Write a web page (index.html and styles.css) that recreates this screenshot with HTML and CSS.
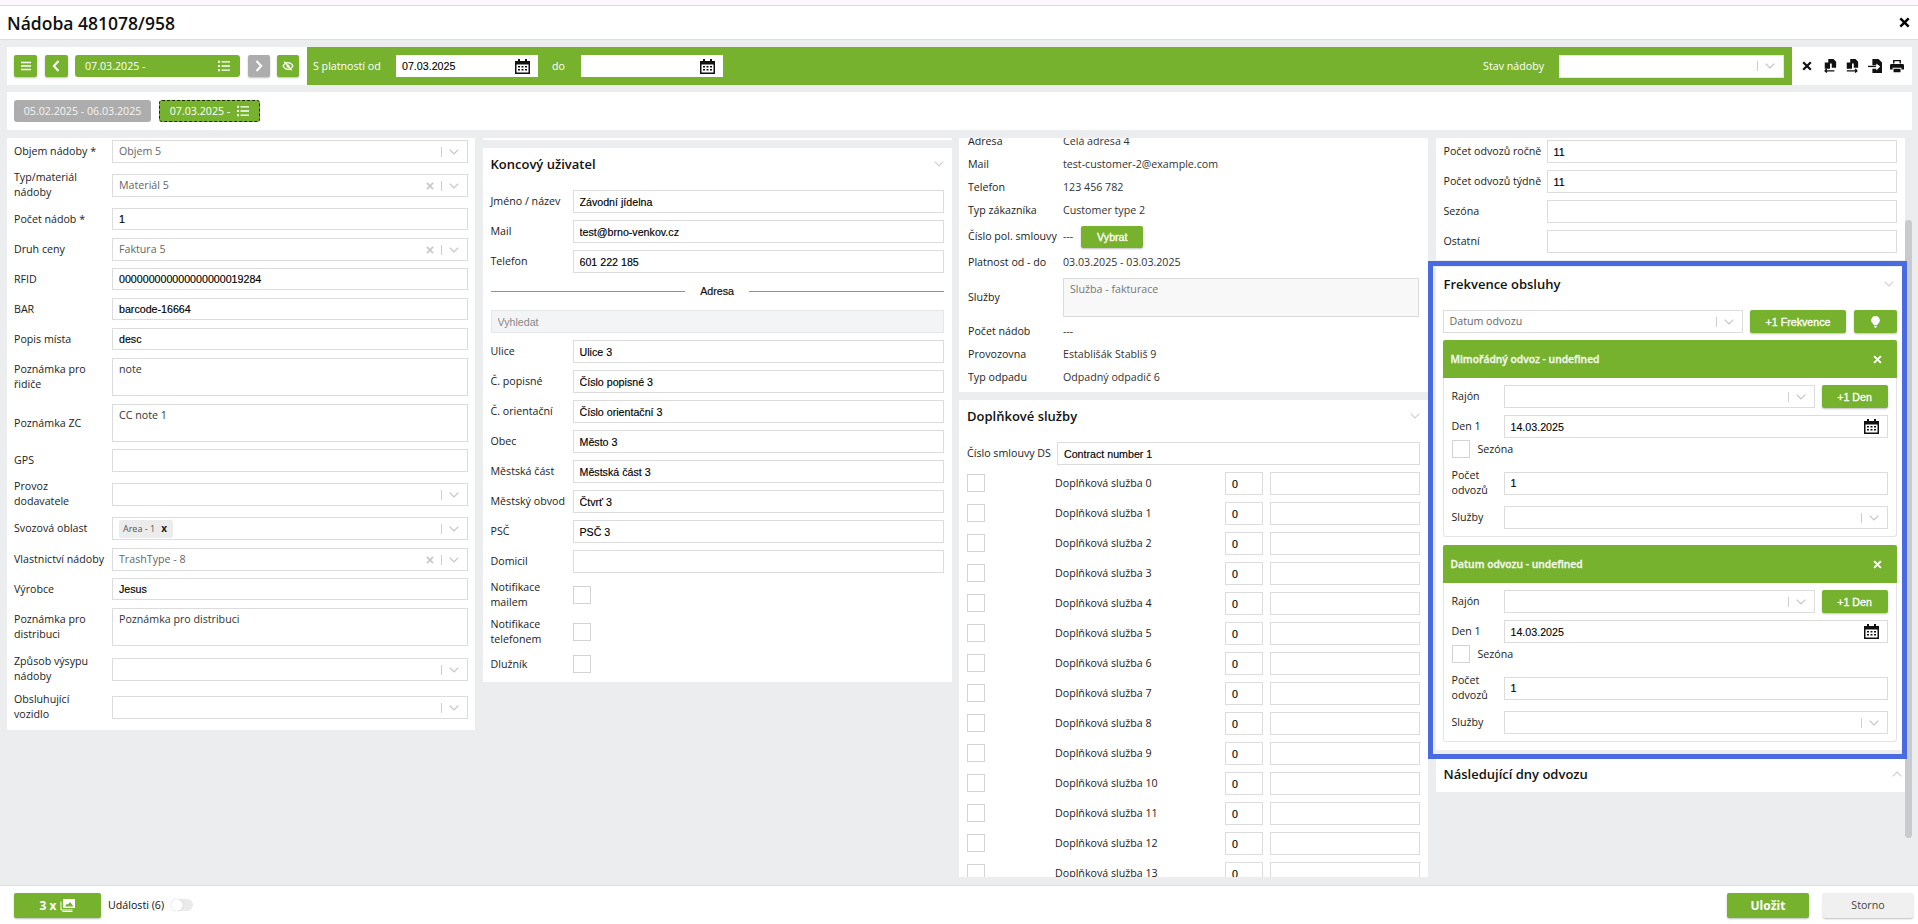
FILE: index.html
```html
<!DOCTYPE html>
<html lang="cs">
<head>
<meta charset="utf-8">
<title>Nádoba 481078/958</title>
<link rel="stylesheet" href="styles.css">
</head>
<body>
<svg class="defs" width="0" height="0" aria-hidden="true">
  <symbol id="i-chev" viewBox="0 0 10 6"><path d="M.7.7 5 5 9.3.7" fill="none" stroke="currentColor" stroke-width="1.2"/></symbol>
  <symbol id="i-x" viewBox="0 0 10 10"><path d="M1.2 1.2 8.8 8.8M8.8 1.2 1.2 8.8" fill="none" stroke="currentColor" stroke-width="2.2"/></symbol>
  <symbol id="i-menu" viewBox="0 0 12 12"><path d="M1 2.5h10M1 6h10M1 9.5h10" stroke="currentColor" stroke-width="1.4"/></symbol>
  <symbol id="i-left" viewBox="0 0 8 12"><path d="M6.5 1 1.8 6l4.7 5" fill="none" stroke="currentColor" stroke-width="2"/></symbol>
  <symbol id="i-right" viewBox="0 0 8 12"><path d="M1.5 1l4.7 5-4.7 5" fill="none" stroke="currentColor" stroke-width="2"/></symbol>
  <symbol id="i-list" viewBox="0 0 12 12"><path d="M0 .8h2v2H0zM0 5h2v2H0zM0 9.2h2v2H0z" fill="currentColor"/><path d="M3.5 1.8H12M3.5 6H12M3.5 10.2H12" stroke="currentColor" stroke-width="1.3"/></symbol>
  <symbol id="i-eye" viewBox="0 0 14 12"><path d="M1 6c1.600-2.700 3.600-4 6-4s4.400 1.300 6 4c-1.600 2.700-3.600 4-6 4S2.600 8.700 1 6z" fill="none" stroke="currentColor" stroke-width="1.400"/><circle cx="7" cy="6" r="1.800" fill="currentColor"/><path d="M2.500 .8 11.500 11.200" stroke="currentColor" stroke-width="1.500"/></symbol>
  <symbol id="i-cal" viewBox="0 0 15 15"><path d="M3 0h2v2h5V0h2v2h3v13H0V2h3zM1.500 5.500V13.500h12V5.500z" fill="currentColor" fill-rule="evenodd"/><path d="M3 7h2v1.500H3zM6.500 7h2v1.500h-2zM10 7h2v1.500h-2zM3 10h2v1.500H3zM6.500 10h2v1.500h-2zM10 10h2v1.500h-2z" fill="currentColor"/></symbol>
  <symbol id="i-copyin" viewBox="0 0 14 16"><path d="M5 0h6l3 3v7H9V5H5zM1 4h6v7H1z" fill="currentColor"/><path d="M1 13.500h11M1 13.500l2.500-2M1 13.500l2.500 2" fill="none" stroke="currentColor" stroke-width="1.400"/></symbol>
  <symbol id="i-copyout" viewBox="0 0 14 16"><path d="M5 0h6l3 3v7H9V5H5zM1 4h6v7H1z" fill="currentColor"/><path d="M1 13.500h12M13 13.500l-2.500-2M13 13.500l-2.500 2" fill="none" stroke="currentColor" stroke-width="1.400"/></symbol>
  <symbol id="i-import" viewBox="0 0 16 16"><path d="M5 0h7l4 4v12H5v-5h4.500v2L14 8.500 9.500 5v2H5z" fill="currentColor"/><path d="M0 8.500h9" stroke="currentColor" stroke-width="1.500"/></symbol>
  <symbol id="i-print" viewBox="0 0 16 16"><path d="M3.500 1h9v4h-1.600V2.600H5.100V5H3.500zM1.500 5.800h13a1.500 1.500 0 0 1 1.500 1.500V12h-3v-2H3v2H0V7.300a1.500 1.500 0 0 1 1.500-1.500zM4 11h8v4H4z" fill="currentColor"/></symbol>
  <symbol id="i-bulb" viewBox="0 0 10 14"><path d="M5 0a5 5 0 0 1 3 9c-.6.500-.8 1-.9 1.500H2.900C2.800 10 2.600 9.500 2 9a5 5 0 0 1 3-9zM3.200 11.500h3.600v1H3.200zM4 13h2v1H4z" fill="currentColor"/></symbol>
  <symbol id="i-imgs" viewBox="0 0 15 13"><path d="M3 0h12v9H3zM5 7.500h8.500L10 3 8 5.500 7 4.500z" fill="currentColor" fill-rule="evenodd"/><path d="M1 2.500V11h11.500M2.500 12.500h10" fill="none" stroke="currentColor" stroke-width="1"/></symbol>
</svg>

<div class="topstrip"></div>
<header class="modal-head">
  <h1 class="modal-title">Nádoba 481078/958</h1>
  <svg class="modal-close"><use href="#i-x"/></svg>
</header>

<div class="toolbar">
  <div class="tb-left">
    <button class="btn btn-sq"><svg class="ic12"><use href="#i-menu"/></svg></button>
    <button class="btn btn-sq"><svg class="ic-ch"><use href="#i-left"/></svg></button>
    <button class="btn btn-date"><span>07.03.2025 -</span><svg class="ic12"><use href="#i-list"/></svg></button>
    <button class="btn btn-sq2 btn-gray"><svg class="ic-ch"><use href="#i-right"/></svg></button>
    <button class="btn btn-sq2"><svg class="ic-eye"><use href="#i-eye"/></svg></button>
  </div>
  <div class="tb-green">
    <span class="tb-label tb-from">S platností od</span>
    <div class="datefield tb-date"><input class="bare" value="07.03.2025" readonly><svg class="ic-cal"><use href="#i-cal"/></svg></div>
    <span class="tb-label tb-do">do</span>
    <div class="datefield tb-date"><input class="bare" readonly><svg class="ic-cal"><use href="#i-cal"/></svg></div>
    <span class="tb-label tb-state">Stav nádoby</span>
    <div class="select tb-select"><span class="val"></span><i class="pipe"></i><svg class="chev"><use href="#i-chev"/></svg></div>
  </div>
  <div class="tb-right">
    <svg class="tb-ic tb-x"><use href="#i-x"/></svg>
    <svg class="tb-ic"><use href="#i-copyin"/></svg>
    <svg class="tb-ic"><use href="#i-copyout"/></svg>
    <svg class="tb-ic"><use href="#i-import"/></svg>
    <svg class="tb-ic"><use href="#i-print"/></svg>
  </div>
</div>

<div class="versions">
  <button class="btn ver ver-old">05.02.2025 - 06.03.2025</button>
  <button class="btn ver ver-cur"><span>07.03.2025 -</span><svg class="ic12"><use href="#i-list"/></svg></button>
</div>

<main class="content">
  <section class="col col1">
    <div class="row"><label class="lab">Objem nádoby *</label><div class="select"><span class="val">Objem 5</span><i class="pipe"></i><svg class="chev"><use href="#i-chev"/></svg></div></div>
    <div class="row row-two"><label class="lab">Typ/materiál nádoby</label><div class="select"><span class="val">Materiál 5</span><svg class="clr"><use href="#i-x"/></svg><i class="pipe"></i><svg class="chev"><use href="#i-chev"/></svg></div></div>
    <div class="row"><label class="lab">Počet nádob *</label><input class="input thin" value="1" readonly></div>
    <div class="row"><label class="lab">Druh ceny</label><div class="select"><span class="val">Faktura 5</span><svg class="clr"><use href="#i-x"/></svg><i class="pipe"></i><svg class="chev"><use href="#i-chev"/></svg></div></div>
    <div class="row"><label class="lab">RFID</label><input class="input thin" value="000000000000000000019284" readonly></div>
    <div class="row"><label class="lab">BAR</label><input class="input thin" value="barcode-16664" readonly></div>
    <div class="row"><label class="lab">Popis místa</label><input class="input thin" value="desc" readonly></div>
    <div class="row row-area"><label class="lab">Poznámka pro řidiče</label><textarea class="area" readonly>note</textarea></div>
    <div class="row row-area row-area-s"><label class="lab">Poznámka ZC</label><textarea class="area" readonly>CC note 1</textarea></div>
    <div class="row"><label class="lab">GPS</label><input class="input" readonly></div>
    <div class="row row-two"><label class="lab">Provoz dodavatele</label><div class="select"><span class="val"></span><i class="pipe"></i><svg class="chev"><use href="#i-chev"/></svg></div></div>
    <div class="row row-tag"><label class="lab">Svozová oblast</label><div class="select"><span class="tag">Area - 1 <b class="tag-x">x</b></span><span class="val"></span><i class="pipe"></i><svg class="chev"><use href="#i-chev"/></svg></div></div>
    <div class="row"><label class="lab">Vlastnictví nádoby</label><div class="select"><span class="val">TrashType - 8</span><svg class="clr"><use href="#i-x"/></svg><i class="pipe"></i><svg class="chev"><use href="#i-chev"/></svg></div></div>
    <div class="row"><label class="lab">Výrobce</label><input class="input thin" value="Jesus" readonly></div>
    <div class="row row-area"><label class="lab">Poznámka pro distribuci</label><textarea class="area" readonly>Poznámka pro distribuci</textarea></div>
    <div class="row row-two"><label class="lab">Způsob výsypu nádoby</label><div class="select"><span class="val"></span><i class="pipe"></i><svg class="chev"><use href="#i-chev"/></svg></div></div>
    <div class="row row-two"><label class="lab">Obsluhující vozidlo</label><div class="select"><span class="val"></span><i class="pipe"></i><svg class="chev"><use href="#i-chev"/></svg></div></div>
  </section>

  <section class="col col2">
    <div class="sliver"></div>
    <div class="card card-user">
      <div class="card-head"><h2 class="card-title">Koncový uživatel</h2><svg class="head-chev"><use href="#i-chev"/></svg></div>
      <div class="row"><label class="lab lab-u">Jméno / název</label><input class="input" value="Závodní jídelna" readonly></div>
      <div class="row"><label class="lab lab-u">Mail</label><input class="input" value="test@brno-venkov.cz" readonly></div>
      <div class="row"><label class="lab lab-u">Telefon</label><input class="input" value="601 222 185" readonly></div>
      <div class="divider"><span>Adresa</span></div>
      <div class="row"><input class="input search" placeholder="Vyhledat" readonly></div>
      <div class="row"><label class="lab lab-u">Ulice</label><input class="input" value="Ulice 3" readonly></div>
      <div class="row"><label class="lab lab-u">Č. popisné</label><input class="input" value="Číslo popisné 3" readonly></div>
      <div class="row"><label class="lab lab-u">Č. orientační</label><input class="input" value="Číslo orientační 3" readonly></div>
      <div class="row"><label class="lab lab-u">Obec</label><input class="input" value="Město 3" readonly></div>
      <div class="row"><label class="lab lab-u">Městská část</label><input class="input" value="Městská část 3" readonly></div>
      <div class="row"><label class="lab lab-u">Městský obvod</label><input class="input" value="Čtvrť 3" readonly></div>
      <div class="row"><label class="lab lab-u">PSČ</label><input class="input" value="PSČ 3" readonly></div>
      <div class="row"><label class="lab lab-u">Domicil</label><input class="input" readonly></div>
      <div class="row row-chk"><label class="lab lab-u">Notifikace mailem</label><span class="check"></span></div>
      <div class="row row-chk"><label class="lab lab-u">Notifikace telefonem</label><span class="check"></span></div>
      <div class="row row-chk row-chk-s"><label class="lab lab-u">Dlužník</label><span class="check"></span></div>
    </div>
  </section>

  <section class="col col3">
    <div class="card card-info">
      <div class="info info-first"><span class="info-k">Adresa</span><span>Celá adresa 4</span></div>
      <div class="info"><span class="info-k">Mail</span><span>test-customer-2@example.com</span></div>
      <div class="info"><span class="info-k">Telefon</span><span>123 456 782</span></div>
      <div class="info"><span class="info-k">Typ zákazníka</span><span>Customer type 2</span></div>
      <div class="info info-btn"><span class="info-k">Číslo pol. smlouvy</span><span>---</span><button class="btn btn-pick">Vybrat</button></div>
      <div class="info"><span class="info-k">Platnost od - do</span><span>03.03.2025 - 03.03.2025</span></div>
      <div class="info info-area"><span class="info-k">Služby</span><textarea class="area area-off" readonly>Služba - fakturace</textarea></div>
      <div class="info"><span class="info-k">Počet nádob</span><span>---</span></div>
      <div class="info"><span class="info-k">Provozovna</span><span>Establišák Stabliš 9</span></div>
      <div class="info"><span class="info-k">Typ odpadu</span><span>Odpadný odpadič 6</span></div>
    </div>
    <div class="card card-extra">
      <div class="card-head card-head-x"><h2 class="card-title">Doplňkové služby</h2><svg class="head-chev"><use href="#i-chev"/></svg></div>
      <div class="row"><label class="lab lab-c">Číslo smlouvy DS</label><input class="input" value="Contract number 1" readonly></div>
      <div class="svc"><span class="check"></span><span class="svc-name">Doplňková služba 0</span><input class="input svc-n" value="0" readonly><input class="input" readonly></div>
      <div class="svc"><span class="check"></span><span class="svc-name">Doplňková služba 1</span><input class="input svc-n" value="0" readonly><input class="input" readonly></div>
      <div class="svc"><span class="check"></span><span class="svc-name">Doplňková služba 2</span><input class="input svc-n" value="0" readonly><input class="input" readonly></div>
      <div class="svc"><span class="check"></span><span class="svc-name">Doplňková služba 3</span><input class="input svc-n" value="0" readonly><input class="input" readonly></div>
      <div class="svc"><span class="check"></span><span class="svc-name">Doplňková služba 4</span><input class="input svc-n" value="0" readonly><input class="input" readonly></div>
      <div class="svc"><span class="check"></span><span class="svc-name">Doplňková služba 5</span><input class="input svc-n" value="0" readonly><input class="input" readonly></div>
      <div class="svc"><span class="check"></span><span class="svc-name">Doplňková služba 6</span><input class="input svc-n" value="0" readonly><input class="input" readonly></div>
      <div class="svc"><span class="check"></span><span class="svc-name">Doplňková služba 7</span><input class="input svc-n" value="0" readonly><input class="input" readonly></div>
      <div class="svc"><span class="check"></span><span class="svc-name">Doplňková služba 8</span><input class="input svc-n" value="0" readonly><input class="input" readonly></div>
      <div class="svc"><span class="check"></span><span class="svc-name">Doplňková služba 9</span><input class="input svc-n" value="0" readonly><input class="input" readonly></div>
      <div class="svc"><span class="check"></span><span class="svc-name">Doplňková služba 10</span><input class="input svc-n" value="0" readonly><input class="input" readonly></div>
      <div class="svc"><span class="check"></span><span class="svc-name">Doplňková služba 11</span><input class="input svc-n" value="0" readonly><input class="input" readonly></div>
      <div class="svc"><span class="check"></span><span class="svc-name">Doplňková služba 12</span><input class="input svc-n" value="0" readonly><input class="input" readonly></div>
      <div class="svc"><span class="check"></span><span class="svc-name">Doplňková služba 13</span><input class="input svc-n" value="0" readonly><input class="input" readonly></div>
    </div>
  </section>

  <section class="col col4">
    <div class="card card-counts">
      <div class="row"><label class="lab lab-n">Počet odvozů ročně</label><input class="input" value="11" readonly></div>
      <div class="row"><label class="lab lab-n">Počet odvozů týdně</label><input class="input" value="11" readonly></div>
      <div class="row"><label class="lab lab-n">Sezóna</label><input class="input" readonly></div>
      <div class="row"><label class="lab lab-n">Ostatní</label><input class="input" readonly></div>
    </div>
    <div class="card card-freq">
      <div class="card-head card-head-f"><h2 class="card-title">Frekvence obsluhy</h2><svg class="head-chev"><use href="#i-chev"/></svg></div>
      <div class="freq-add">
        <div class="select"><span class="val">Datum odvozu</span><i class="pipe"></i><svg class="chev"><use href="#i-chev"/></svg></div>
        <button class="btn btn-addf">+1 Frekvence</button>
        <button class="btn btn-bulb"><svg class="ic-bulb"><use href="#i-bulb"/></svg></button>
      </div>
      <div class="panel">
        <div class="panel-head"><span>Mimořádný odvoz - undefined</span><svg class="panel-x"><use href="#i-x"/></svg></div>
        <div class="panel-body">
          <div class="row"><label class="lab lab-p">Rajón</label><div class="select"><span class="val"></span><i class="pipe"></i><svg class="chev"><use href="#i-chev"/></svg></div><button class="btn btn-day">+1 Den</button></div>
          <div class="row row-den"><label class="lab lab-p">Den 1</label><div class="datefield"><input class="bare" value="14.03.2025" readonly><svg class="ic-cal"><use href="#i-cal"/></svg></div></div>
          <div class="season"><span class="check"></span><span class="season-l">Sezóna</span></div>
          <div class="row row-count"><label class="lab lab-p">Počet odvozů</label><input class="input" value="1" readonly></div>
          <div class="row row-last"><label class="lab lab-p">Služby</label><div class="select"><span class="val"></span><i class="pipe"></i><svg class="chev"><use href="#i-chev"/></svg></div></div>
        </div>
      </div>
      <div class="panel">
        <div class="panel-head"><span>Datum odvozu - undefined</span><svg class="panel-x"><use href="#i-x"/></svg></div>
        <div class="panel-body">
          <div class="row"><label class="lab lab-p">Rajón</label><div class="select"><span class="val"></span><i class="pipe"></i><svg class="chev"><use href="#i-chev"/></svg></div><button class="btn btn-day">+1 Den</button></div>
          <div class="row row-den"><label class="lab lab-p">Den 1</label><div class="datefield"><input class="bare" value="14.03.2025" readonly><svg class="ic-cal"><use href="#i-cal"/></svg></div></div>
          <div class="season"><span class="check"></span><span class="season-l">Sezóna</span></div>
          <div class="row row-count"><label class="lab lab-p">Počet odvozů</label><input class="input" value="1" readonly></div>
          <div class="row row-last"><label class="lab lab-p">Služby</label><div class="select"><span class="val"></span><i class="pipe"></i><svg class="chev"><use href="#i-chev"/></svg></div></div>
        </div>
      </div>
    </div>
    <div class="card card-next">
      <div class="card-head card-head-n"><h2 class="card-title">Následující dny odvozu</h2><svg class="head-chev head-up"><use href="#i-chev"/></svg></div>
    </div>
  </section>

  <div class="scrollthumb"></div>
  <div class="highlight"></div>
</main>

<footer class="foot">
  <button class="btn btn-photos"><span>3 x</span><svg class="ic-imgs"><use href="#i-imgs"/></svg></button>
  <span class="events">Události (6)</span>
  <span class="toggle"><i class="knob"></i></span>
  <span class="foot-space"></span>
  <button class="btn btn-save">Uložit</button>
  <button class="btn btn-cancel">Storno</button>
</footer>
</body>
</html>
```

FILE: styles.css
```css
* { box-sizing: border-box; }
html, body { margin: 0; height: 100%; }
body {
  width: 1918px; height: 924px; overflow: hidden;
  display: flex; flex-direction: column;
  background: #ecedef; color: #222;
  font: 10.67px/15px "Open Sans", sans-serif;
}
.defs { position: absolute; }
button { font: inherit; border: 0; padding: 0; cursor: pointer; }
h1, h2 { margin: 0; }

.topstrip { height: 6px; flex: none; background: #fdf6fd; border-bottom: 1px solid #dcdcdf; }
.modal-head {
  height: 34px; flex: none; display: flex; align-items: center; justify-content: space-between;
  padding: 0 8px 0 7px; background: #fff; border-bottom: 1px solid #dcdddf;
}
.modal-title { font-size: 17.5px; line-height: 24px; font-weight: 600; color: #111; }
.modal-close { width: 11px; height: 11px; color: #000; }

/* buttons */
.btn {
  display: inline-flex; align-items: center; justify-content: center;
  background: #77b22f; color: #fff; border-radius: 2px;
  box-shadow: 0 1px 2px rgba(0,0,0,.25); flex: none;
}
.btn-gray { background: #adadad; }
.btn-sq { width: 23px; height: 22px; }
.btn-sq2 { width: 22px; height: 22px; }
.btn-date { width: 165px; height: 22px; justify-content: space-between; padding: 0 10px; border-radius: 3px; box-shadow: none; }
.ic12 { width: 12px; height: 12px; }
.ic-ch { width: 8px; height: 12px; }
.ic-eye { width: 12px; height: 10px; }

/* toolbar */
.toolbar { height: 38px; flex: none; display: flex; margin: 7px 6px 0 7px; background: #fff; }
.tb-left { width: 300px; flex: none; display: flex; align-items: center; gap: 7.5px; padding-left: 7px; }
.tb-green { flex: 1; display: flex; align-items: center; background: #77b22f; padding-left: 6px; }
.tb-label { color: #fff; }
.tb-from { width: 83px; flex: none; }
.tb-do { width: 29px; flex: none; margin-left: 14px; }
.tb-state { margin-left: auto; margin-right: 15px; }
.tb-green .tb-date { width: 142px; flex: none; height: 22px; border: 0; }
.tb-green .tb-select { width: 225px; flex: none; margin-right: 8px; border-color: #e6e6e6; }
.tb-right { width: 120px; flex: none; display: flex; align-items: center; gap: 6.5px; padding-left: 7px; }
.tb-ic { width: 16px; height: 14px; color: #111; }
.tb-x { padding: 2px 3px; }

.versions { height: 38px; flex: none; display: flex; align-items: center; gap: 8px; margin: 7px 6px 0 7px; padding-left: 7px; background: #fff; }
.ver { height: 22px; border-radius: 3px; box-shadow: none; }
.ver-old { width: 137px; background: #adadad; color: #f4f4f4; }
.ver-cur { width: 101px; gap: 7px; border: 1px dashed #1d2b10; }

/* content */
.content {
  position: relative; height: 739px; flex: none; margin-top: 8px; padding-left: 7px;
  display: grid; grid-template-columns: 468px 469px 469px 469px; column-gap: 7.5px;
  overflow: hidden; align-items: start;
}
.col { min-width: 0; }
.col1 { background: #fff; padding: 2px 7px 0; height: 592px; }
.sliver { height: 2px; background: #fff; margin-bottom: 8px; }
.card { background: #fff; }
.col3 { height: 739px; }

.row { display: flex; align-items: flex-start; gap: 0; height: 30px; }
.row-two { height: 38px; }
.row-two .select { margin-top: 4px; }
.row-two .lab { height: 30px; line-height: 15px; display: block; }
.row-area { height: 46px; }
.row-area-s { height: 45px; }
.row-area .lab { height: 38px; display: flex; align-items: center; line-height: 15px; }
.row-tag { height: 31px; }

.lab { width: 98px; flex: none; height: 23px; line-height: 23px; color: #222; padding-right: 7px; }
.lab-u { width: 82px; padding-right: 0; }
.lab-c { width: 90px; white-space: nowrap; padding-right: 0; }
.lab-n { width: 103px; white-space: nowrap; padding-right: 0; }
.lab-p { width: 52px; padding-right: 0; }

.input, .area, .select, .datefield { border: 1px solid #dcdcdc; background: #fff; border-radius: 0; }
.input {
  flex: 1; min-width: 0; width: 100%; height: 23px; padding: 0 6px;
  font: 10.67px "Liberation Sans", sans-serif; color: #000; outline: 0;
  -webkit-text-stroke: .15px;
}
.thin { height: 22px; }
.area {
  flex: 1; min-width: 0; height: 38px; padding: 3px 6px; resize: none; overflow: hidden;
  font: 10.67px/15px "Open Sans", sans-serif; color: #333; outline: 0; display: block;
}
.select { flex: 1; min-width: 0; height: 23px; display: flex; align-items: center; padding: 0 8px 0 6px; color: #666; }
.val { flex: 1; min-width: 0; white-space: nowrap; }
.pipe { width: 1px; height: 10px; background: #cfcfcf; margin: 0 7px 0 0; flex: none; }
.chev { width: 10px; height: 6px; color: #c4c4c4; flex: none; }
.clr { width: 8px; height: 8px; color: #c8c8c8; margin-right: 7px; flex: none; }
.tag { display: inline-flex; align-items: center; height: 18px; padding: 0 6px 0 4px; background: #ececec; border-radius: 2px; font-size: 9px; color: #555; gap: 6px; }
.tag-x { color: #222; font-size: 10px; }

.datefield { flex: 1; min-width: 0; height: 23px; display: flex; align-items: center; padding-right: 8px; }
.bare { flex: 1; min-width: 0; height: 100%; border: 0; padding: 0 6px; background: transparent; font: 10.67px "Liberation Sans", sans-serif; color: #000; outline: 0; -webkit-text-stroke: .1px; }
.ic-cal { width: 15px; height: 15px; color: #111; flex: none; }

.check { display: block; width: 18px; height: 18px; border: 1px solid #d4d4d4; background: #fff; flex: none; }

/* col 2 */
.card-user { padding: 0 8px; height: 534px; }
.card-head { display: flex; align-items: center; justify-content: space-between; height: 32px; margin-bottom: 10px; }
.card-title { font-size: 13px; line-height: 20px; font-weight: 600; color: #111; }
.head-chev { width: 10px; height: 6px; color: #d0d0d0; flex: none; }
.head-up { transform: rotate(180deg); }
.divider { height: 22px; margin-bottom: 8px; display: flex; align-items: center; gap: 15px; font: 10.67px "Liberation Sans", sans-serif; color: #111; -webkit-text-stroke: .2px; }
.divider::before, .divider::after { content: ""; flex: 1; height: 1px; background: #79ad3d; }
.search { background: #f3f4f6; border-color: #e6e7e9; -webkit-text-stroke: 0; }
.search::placeholder { color: #888; }
.row-chk { height: 37px; }
.row-chk .lab { height: 30px; line-height: 15px; }
.row-chk .check { margin-top: 6px; }
.row-chk-s { height: 28px; }
.row-chk-s .lab { height: 21px; line-height: 21px; }
.row-chk-s .check { margin-top: 1px; }

/* col 3 */
.card-info { height: 254px; overflow: hidden; padding: 0 9px; }
.info { display: flex; align-items: center; min-height: 23px; color: #333; }
.info-first { margin-top: -8px; }
.info-k { width: 95px; flex: none; color: #222; white-space: nowrap; }
.info-btn { height: 29px; }
.btn-pick { width: 62px; height: 22px; margin-left: 8px; font: 10.67px "Liberation Sans", sans-serif; -webkit-text-stroke: .3px; }
.info-area { margin: 4px 0 3px; }
.area-off { height: 39px; background: #f8f8f8; color: #777; }
.card-extra { margin-top: 8px; height: 477px; overflow: hidden; padding: 0 8px; }
.card-head-x { margin-bottom: 10px; }
.svc { display: flex; align-items: flex-start; height: 30px; }
.svc .check { margin-top: 2px; }
.svc-name { width: 170px; margin-left: 70px; line-height: 23px; flex: none; color: #222; }
.svc-n { flex: none; width: 38px; margin-right: 7px; }

/* col 4 */
.card-counts { padding: 2px 8px 0; height: 122px; }
.card-freq { margin-top: 7px; padding: 0 8px 8px 7px; }
.card-head-f { height: 34px; margin-bottom: 9px; padding-right: 3px; padding-left: 1px; }
.freq-add { display: flex; align-items: flex-start; gap: 7.5px; margin-bottom: 7px; }
.btn-addf { width: 96px; height: 23px; font: 10.67px "Liberation Sans", sans-serif; -webkit-text-stroke: .3px; }
.btn-bulb { width: 43px; height: 23px; }
.ic-bulb { width: 9px; height: 12px; }
.panel { margin-bottom: 8px; border-radius: 2px; overflow: hidden; }
.panel:last-child { margin-bottom: 0; }
.panel-head {
  height: 38px; display: flex; align-items: center; justify-content: space-between;
  background: #77b22f; color: #f4f8ee; padding: 0 15px 0 8px; font-size: 10.3px; font-weight: 600;
  -webkit-text-stroke: .3px;
}
.panel-x { width: 9px; height: 9px; color: #fff; }
.panel-body { border: 1px solid #e4e4e4; border-top: 0; padding: 7px 8px; border-radius: 0 0 3px 3px; }
.btn-day { width: 66px; height: 23px; margin-left: 7px; font: 10.67px "Liberation Sans", sans-serif; -webkit-text-stroke: .3px; }
.row-den { height: 25px; }
.season { display: flex; height: 28px; align-items: flex-start; }
.season-l { margin-left: 8px; line-height: 18px; }
.row-count { height: 38px; }
.row-count .lab { height: 30px; line-height: 15px; }
.row-count .input { margin-top: 3.5px; }
.row-last { height: 23px; }
.card-next { margin-top: 8px; }
.card-head-n { height: 34px; margin: 0; padding: 0 3px 2px 8px; }

.scrollthumb { position: absolute; left: 1905px; top: 82px; width: 7px; height: 618px; border-radius: 4px; background: #c9cacd; }
.highlight { position: absolute; left: 1428px; top: 123px; width: 479px; height: 498px; border: 5px solid #4a6be0; pointer-events: none; }

/* footer */
.foot {
  margin-top: 8px; height: 39px; flex: none; display: flex; align-items: flex-start;
  background: #fff; border-top: 1px solid #dcdcdc; padding: 7px 5px 0 14px;
}
.btn-photos { width: 87px; height: 25px; gap: 4px; font-weight: 700; font-size: 12px; }
.ic-imgs { width: 15px; height: 13px; }
.events { margin-left: 7px; line-height: 25px; color: #111; }
.toggle { width: 22px; height: 12px; margin: 6px 0 0 7px; border-radius: 6px; background: #e9eaec; position: relative; }
.knob { position: absolute; left: 0; top: 0; width: 12px; height: 12px; border-radius: 50%; background: #fff; box-shadow: 0 0 1px rgba(0,0,0,.3); }
.foot-space { flex: 1; }
.btn-save { width: 82px; height: 25px; font-weight: 700; font-size: 12px; }
.btn-cancel { width: 90px; height: 25px; margin-left: 14px; background: #f0f0f0; color: #444; }
```
